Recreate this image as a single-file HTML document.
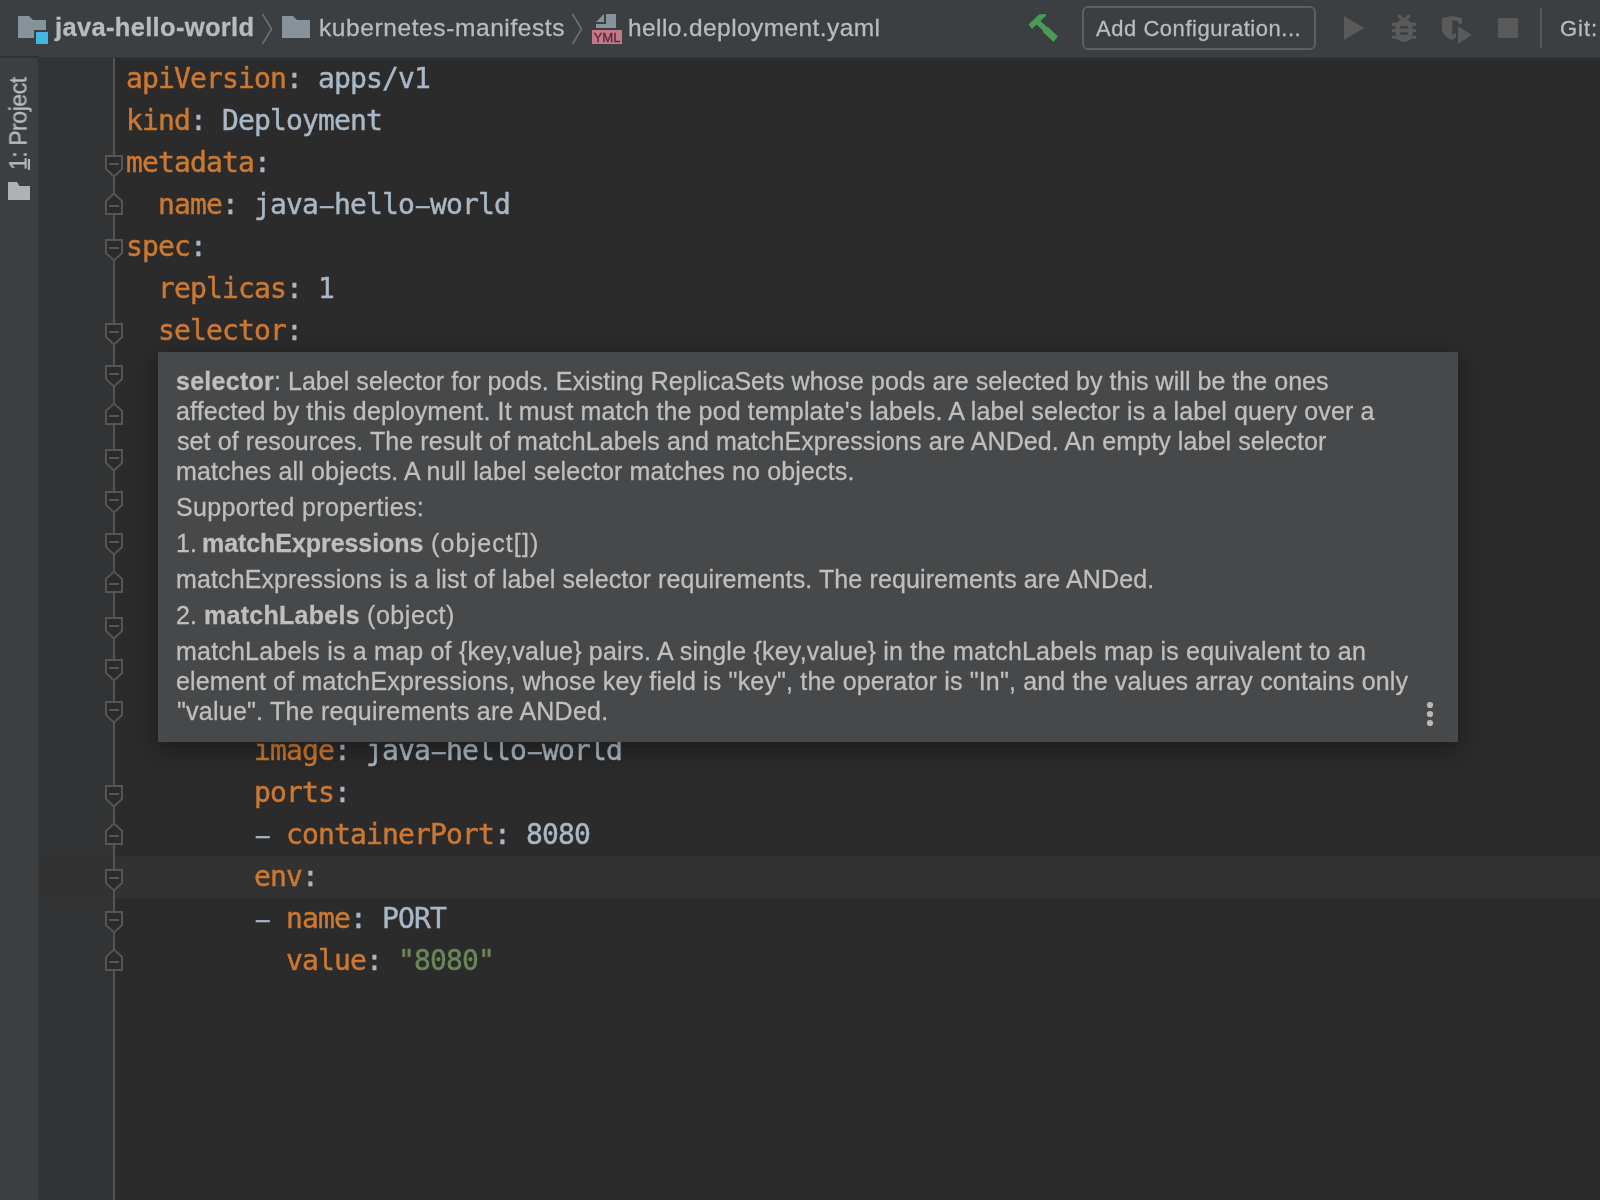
<!DOCTYPE html>
<html><head><meta charset="utf-8"><title>hello.deployment.yaml</title>
<style>
html,body{margin:0;padding:0;background:#2b2b2b;}
body{width:1600px;height:1200px;position:relative;overflow:hidden;font-family:"Liberation Sans",sans-serif;}
.abs{position:absolute;}
#topbar{left:0;top:0;width:1600px;height:57px;background:#3c3f41;border-bottom:1px solid #343638;}
#side{left:0;top:58px;width:38px;height:1142px;background:#3c3f41;}
#sideline{left:0;top:56px;width:39px;height:2px;background:#323232;}
#gutter{left:38px;top:58px;width:76px;height:1142px;background:#313335;}
#curline{left:38px;top:856px;width:1562px;height:42px;background:#323232;}
.cl{position:absolute;left:126px;height:42px;line-height:42px;white-space:pre;font-family:"DejaVu Sans Mono","Liberation Mono",monospace;font-size:28px;letter-spacing:-0.857px;-webkit-text-stroke:0.45px currentColor;}
.cl .hy{display:inline-block;font-style:normal;transform:scale(1.9,0.85);-webkit-text-stroke:0.3px currentColor;}
.bc{position:absolute;top:0;height:55px;line-height:55px;white-space:pre;color:#bbbbbb;font-size:24.5px;}
.pl{position:absolute;height:30px;line-height:30px;white-space:pre;color:#bfbfbf;font-size:25px;}
.cl,.bc,.pl,#proj{will-change:transform;}
.bc,.pl,#proj{-webkit-text-stroke:0.3px currentColor;}
#popup{left:158px;top:352px;width:1300px;height:390px;background:#46484a;box-shadow:0 7px 22px 3px rgba(0,0,0,0.30);}
#proj{position:absolute;left:0;top:0;white-space:nowrap;color:#bbbbbb;font-size:23px;letter-spacing:-0.45px;line-height:26px;transform-origin:0 0;transform:translate(5.5px,170px) rotate(-90deg);}
#proj u{text-decoration:none;}
#projul{left:28px;top:159px;width:2px;height:11px;background:#b4b4b4;}
</style></head><body>
<div class="abs" id="topbar"></div>
<div class="abs" id="side"></div>
<div class="abs" id="sideline"></div>
<div class="abs" id="gutter"></div>
<div class="abs" id="curline"></div>

<!-- navigation bar / toolbar text -->
<span class="bc" style="left:54.5px;letter-spacing:0.331px;font-weight:bold;font-size:25.5px;">java-hello-world</span>
<span class="bc" style="left:318.5px;letter-spacing:0.594px;">kubernetes-manifests</span>
<span class="bc" style="left:628.25px;letter-spacing:0.409px;">hello.deployment.yaml</span>
<span class="bc" style="left:1096px;letter-spacing:0.54px;font-size:22px;top:1px;">Add Configuration...</span>
<span class="bc" style="left:1559.5px;letter-spacing:0.963px;font-size:22px;top:1px;">Git:</span>
<div class="abs" id="addcfg" style="left:1082px;top:6px;width:230px;height:40px;border:2px solid #5e6060;border-radius:6px;"></div>
<div id="proj"><u>1</u>: Project</div>
<div class="abs" id="projul"></div>

<svg class="abs" style="left:0;top:0" width="1600" height="58" viewBox="0 0 1600 58">
 <!-- project folder -->
 <path d="M18 16 H29 L33 20 H46 V38 H18 Z" fill="#87939a"/>
 <rect x="34" y="30" width="16" height="16" fill="#3c3f41"/>
 <rect x="36" y="32" width="12" height="12" fill="#40b6e0"/>
 <path d="M262.5 14 L271.5 29 L262.5 44" fill="none" stroke="#6a7073" stroke-width="1.6"/>
 <path d="M282 16 H293 L297 20 H310 V38 H282 Z" fill="#87939a"/>
 <path d="M572.5 14 L581.5 29 L572.5 44" fill="none" stroke="#6a7073" stroke-width="1.6"/>
 <!-- yml file -->
 <path d="M604 14 V22 H596 Z" fill="#87939a"/>
 <path d="M606 14 H616 V28 H596 V24 H606 Z" fill="#87939a"/>
 <rect x="592" y="30" width="30" height="14" fill="#c5788a"/>
 <text x="607" y="42" text-anchor="middle" font-family="Liberation Sans, sans-serif" font-size="12" stroke="#5c2d3c" stroke-width="0.4" fill="#5c2d3c" textLength="27" lengthAdjust="spacingAndGlyphs">YML</text>
 <!-- hammer -->
 <path d="M1028.5 24.5 L1039 14.5 L1046 14 L1046 15.5 L1040.5 21 L1047 27 L1048 27 L1058 36.5 L1053.5 42 L1043 32 L1043 30.5 L1036.5 24.5 L1032 29 Z" fill="#499c54"/>
 <!-- run -->
 <path d="M1344 16 L1364 28 L1344 40 Z" fill="#5a5a5a"/>
 <!-- bug -->
 <g fill="#5a5a5a">
  <path d="M1404 19.5 c5 0 8.7 3.5 8.7 8 v6 c0 4.5 -3.7 8.5 -8.7 8.5 s-8.7 -4 -8.7 -8.5 v-6 c0 -4.5 3.7 -8 8.7 -8z"/>
  <rect x="1392" y="22.7" width="24" height="3.1"/>
  <rect x="1392" y="29" width="24" height="3"/>
  <rect x="1392" y="35.7" width="24" height="3.1"/>
  <path d="M1398.2 15.2 L1404 20.8 L1409.8 15.2" fill="none" stroke="#5a5a5a" stroke-width="3.3"/>
 </g>
 <rect x="1400.2" y="26.2" width="7.6" height="2.5" fill="#3c3f41"/>
 <rect x="1400.2" y="32.2" width="7.6" height="2.6" fill="#3c3f41"/>
 <!-- coverage -->
 <path d="M1442 18 L1452 16 L1462 18 V23.7 H1457.8 V21.2 L1452.2 20 V35.7 L1456 32.7 V37.5 L1452 40 C1447 37.5 1442 34 1442 29 Z" fill="#5a5a5a"/>
 <path d="M1458 26.2 L1471.8 35 L1458 44 Z" fill="#5a5a5a"/>
 <!-- stop -->
 <rect x="1498" y="18" width="20" height="20" fill="#5a5a5a"/>
 <rect x="1540" y="8" width="2" height="40" fill="#555555"/>
</svg>

<!-- side folder icon -->
<svg class="abs" style="left:0;top:170px" width="38" height="40" viewBox="0 170 38 40">
 <path d="M8 182 H17 L19.5 186 H30 V200 H8 Z" fill="#afb1b3"/>
</svg>

<!-- fold line & markers -->
<svg class="abs" style="left:100px;top:58px" width="30" height="1142" viewBox="100 58 30 1142">
 <rect x="113" y="58" width="2" height="1142" fill="#555555"/>
 <g fill="#2b2b2b" stroke="#555555" stroke-width="2">
 <path d="M106 156 H122 V169 L114 176.5 L106 169 Z"/><path d="M109 164 H119"/><path d="M106 214 H122 V201 L114 193.5 L106 201 Z"/><path d="M109 206 H119"/><path d="M106 240 H122 V253 L114 260.5 L106 253 Z"/><path d="M109 248 H119"/><path d="M106 324 H122 V337 L114 344.5 L106 337 Z"/><path d="M109 332 H119"/><path d="M106 366 H122 V379 L114 386.5 L106 379 Z"/><path d="M109 374 H119"/><path d="M106 424 H122 V411 L114 403.5 L106 411 Z"/><path d="M109 416 H119"/><path d="M106 450 H122 V463 L114 470.5 L106 463 Z"/><path d="M109 458 H119"/><path d="M106 492 H122 V505 L114 512.5 L106 505 Z"/><path d="M109 500 H119"/><path d="M106 534 H122 V547 L114 554.5 L106 547 Z"/><path d="M109 542 H119"/><path d="M106 592 H122 V579 L114 571.5 L106 579 Z"/><path d="M109 584 H119"/><path d="M106 618 H122 V631 L114 638.5 L106 631 Z"/><path d="M109 626 H119"/><path d="M106 660 H122 V673 L114 680.5 L106 673 Z"/><path d="M109 668 H119"/><path d="M106 702 H122 V715 L114 722.5 L106 715 Z"/><path d="M109 710 H119"/><path d="M106 786 H122 V799 L114 806.5 L106 799 Z"/><path d="M109 794 H119"/><path d="M106 844 H122 V831 L114 823.5 L106 831 Z"/><path d="M109 836 H119"/><path d="M106 870 H122 V883 L114 890.5 L106 883 Z"/><path d="M109 878 H119"/><path d="M106 912 H122 V925 L114 932.5 L106 925 Z"/><path d="M109 920 H119"/><path d="M106 970 H122 V957 L114 949.5 L106 957 Z"/><path d="M109 962 H119"/>
 </g>
</svg>

<!-- code -->
<div class="cl" style="top:58px"><span style="color:#cc7832">apiVersion</span><span style="color:#a9b7c6">: apps/v1</span></div>
<div class="cl" style="top:100px"><span style="color:#cc7832">kind</span><span style="color:#a9b7c6">: Deployment</span></div>
<div class="cl" style="top:142px"><span style="color:#cc7832">metadata</span><span style="color:#a9b7c6">:</span></div>
<div class="cl" style="top:184px"><span style="color:#a9b7c6">  </span><span style="color:#cc7832">name</span><span style="color:#a9b7c6">: java<i class=hy>-</i>hello<i class=hy>-</i>world</span></div>
<div class="cl" style="top:226px"><span style="color:#cc7832">spec</span><span style="color:#a9b7c6">:</span></div>
<div class="cl" style="top:268px"><span style="color:#a9b7c6">  </span><span style="color:#cc7832">replicas</span><span style="color:#a9b7c6">: 1</span></div>
<div class="cl" style="top:310px"><span style="color:#a9b7c6">  </span><span style="color:#cc7832">selector</span><span style="color:#a9b7c6">:</span></div>
<div class="cl" style="top:730px"><span style="color:#a9b7c6">        </span><span style="color:#cc7832">image</span><span style="color:#a9b7c6">: java<i class=hy>-</i>hello<i class=hy>-</i>world</span></div>
<div class="cl" style="top:772px"><span style="color:#a9b7c6">        </span><span style="color:#cc7832">ports</span><span style="color:#a9b7c6">:</span></div>
<div class="cl" style="top:814px"><span style="color:#a9b7c6">        <i class=hy>-</i> </span><span style="color:#cc7832">containerPort</span><span style="color:#a9b7c6">: 8080</span></div>
<div class="cl" style="top:856px"><span style="color:#a9b7c6">        </span><span style="color:#cc7832">env</span><span style="color:#a9b7c6">:</span></div>
<div class="cl" style="top:898px"><span style="color:#a9b7c6">        <i class=hy>-</i> </span><span style="color:#cc7832">name</span><span style="color:#a9b7c6">: PORT</span></div>
<div class="cl" style="top:940px"><span style="color:#a9b7c6">          </span><span style="color:#cc7832">value</span><span style="color:#a9b7c6">: </span><span style="color:#6a8759">&quot;8080&quot;</span></div>

<!-- doc popup -->
<div class="abs" id="popup"></div>
<span class="pl" style="left:176.4px;letter-spacing:0.263px;font-weight:bold;top:366px;">selector</span>
<span class="pl" style="left:274px;letter-spacing:0.042px;top:366px;">: Label selector for pods. Existing ReplicaSets whose pods are selected by this will be the ones</span>
<span class="pl" style="left:175.6px;letter-spacing:0.131px;top:396px;">affected by this deployment. It must match the pod template's labels. A label selector is a label query over a</span>
<span class="pl" style="left:176.6px;letter-spacing:0.091px;top:426px;">set of resources. The result of matchLabels and matchExpressions are ANDed. An empty label selector</span>
<span class="pl" style="left:175.8px;letter-spacing:0.141px;top:456px;">matches all objects. A null label selector matches no objects.</span>
<span class="pl" style="left:175.8px;letter-spacing:0.366px;top:492px;">Supported properties:</span>
<span class="pl" style="left:176px;letter-spacing:-0.004px;top:528px;">1.</span>
<span class="pl" style="left:202px;letter-spacing:-0.061px;font-weight:bold;top:528px;">matchExpressions</span>
<span class="pl" style="left:431px;letter-spacing:1.119px;top:528px;">(object[])</span>
<span class="pl" style="left:175.8px;letter-spacing:0.119px;top:564px;">matchExpressions is a list of label selector requirements. The requirements are ANDed.</span>
<span class="pl" style="left:176px;letter-spacing:0.096px;top:600px;">2.</span>
<span class="pl" style="left:204px;letter-spacing:0.282px;font-weight:bold;top:600px;">matchLabels</span>
<span class="pl" style="left:367px;letter-spacing:0.566px;top:600px;">(object)</span>
<span class="pl" style="left:175.8px;letter-spacing:0.209px;top:636px;">matchLabels is a map of {key,value} pairs. A single {key,value} in the matchLabels map is equivalent to an</span>
<span class="pl" style="left:175.8px;letter-spacing:0.165px;top:666px;">element of matchExpressions, whose key field is &quot;key&quot;, the operator is &quot;In&quot;, and the values array contains only</span>
<span class="pl" style="left:176.5px;letter-spacing:0.23px;top:696px;">&quot;value&quot;. The requirements are ANDed.</span>
<svg class="abs" style="left:1420px;top:698px" width="20" height="32" viewBox="0 0 20 32"><circle cx="10" cy="7" r="3.1" fill="#b9b9b9"/><circle cx="10" cy="16" r="3.1" fill="#b9b9b9"/><circle cx="10" cy="25" r="3.1" fill="#b9b9b9"/></svg>
</body></html>
